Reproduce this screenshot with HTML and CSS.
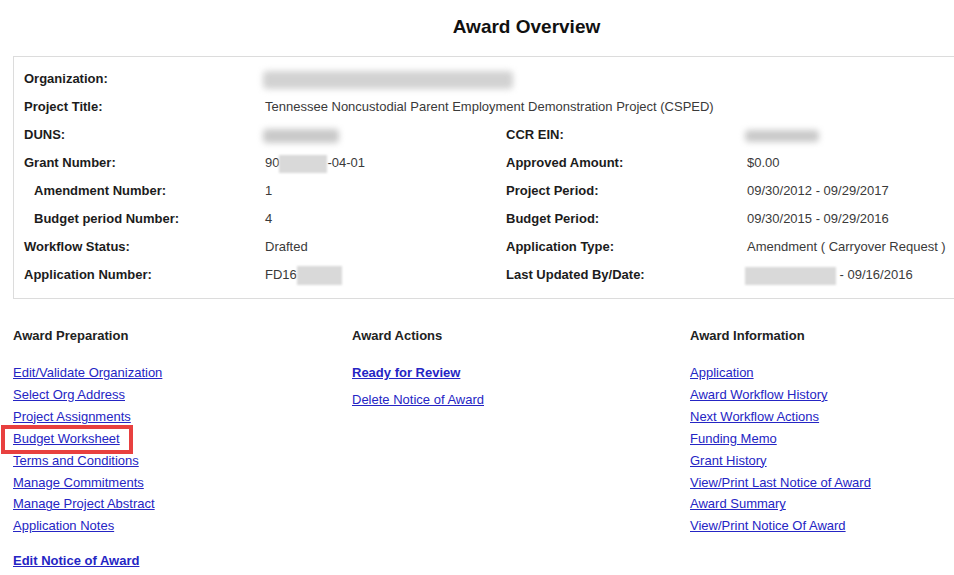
FILE: index.html
```html
<!DOCTYPE html>
<html lang="en">
<head>
    <meta charset="UTF-8">
    <title>Award Overview</title>
    <link rel="stylesheet" href="styles.css">
</head>
<body>
    <div class="page">
        <h1 class="page-title">Award Overview</h1>

        <!-- Summary box -->
        <div class="overview">
            <div class="label">Organization:</div>
            <div class="value wide"><span class="blur blur-org"></span></div>

            <div class="label">Project Title:</div>
            <div class="value wide">Tennessee Noncustodial Parent Employment Demonstration Project (CSPED)</div>

            <div class="label">DUNS:</div>
            <div class="value"><span class="blur blur-duns"></span></div>
            <div class="label">CCR EIN:</div>
            <div class="value"><span class="blur blur-ein"></span></div>

            <div class="label">Grant Number:</div>
            <div class="value">90<span class="mask mask-grant"></span>-04-01</div>
            <div class="label">Approved Amount:</div>
            <div class="value">$0.00</div>

            <div class="label sub">Amendment Number:</div>
            <div class="value">1</div>
            <div class="label">Project Period:</div>
            <div class="value">09/30/2012 - 09/29/2017</div>

            <div class="label sub">Budget period Number:</div>
            <div class="value">4</div>
            <div class="label">Budget Period:</div>
            <div class="value">09/30/2015 - 09/29/2016</div>

            <div class="label">Workflow Status:</div>
            <div class="value">Drafted</div>
            <div class="label">Application Type:</div>
            <div class="value">Amendment ( Carryover Request )</div>

            <div class="label">Application Number:</div>
            <div class="value">FD16<span class="mask mask-app"></span></div>
            <div class="label">Last Updated By/Date:</div>
            <div class="value"><span class="mask mask-user"></span> - 09/16/2016</div>
        </div>

        <!-- Link columns -->
        <div class="link-columns">
            <div class="link-col">
                <div class="col-title">Award Preparation</div>
                <ul class="link-list">
                    <li><a href="#">Edit/Validate Organization</a></li>
                    <li><a href="#">Select Org Address</a></li>
                    <li><a href="#">Project Assignments</a></li>
                    <li class="highlight"><a href="#">Budget Worksheet</a></li>
                    <li><a href="#">Terms and Conditions</a></li>
                    <li><a href="#">Manage Commitments</a></li>
                    <li><a href="#">Manage Project Abstract</a></li>
                    <li><a href="#">Application Notes</a></li>
                </ul>
                <a href="#" class="strong-link edit-notice">Edit Notice of Award</a>
            </div>
            <div class="link-col">
                <div class="col-title">Award Actions</div>
                <ul class="link-list actions">
                    <li><a href="#" class="strong-link">Ready for Review</a></li>
                    <li><a href="#">Delete Notice of Award</a></li>
                </ul>
            </div>
            <div class="link-col">
                <div class="col-title">Award Information</div>
                <ul class="link-list">
                    <li><a href="#">Application</a></li>
                    <li><a href="#">Award Workflow History</a></li>
                    <li><a href="#">Next Workflow Actions</a></li>
                    <li><a href="#">Funding Memo</a></li>
                    <li><a href="#">Grant History</a></li>
                    <li><a href="#">View/Print Last Notice of Award</a></li>
                    <li><a href="#">Award Summary</a></li>
                    <li><a href="#">View/Print Notice Of Award</a></li>
                </ul>
            </div>
        </div>
    </div>
</body>
</html>
```

FILE: styles.css
```css
html, body {
    margin: 0;
    padding: 0;
    background: #fff;
}
body {
    font-family: "Liberation Sans", Arial, sans-serif;
    font-size: 13px;
    color: #333;
    overflow: hidden;
}
.page {
    margin-left: 13px;
}
/* the page is wider than the window, so the title sits right of centre */
.page-title {
    margin: 0 0 0 86px;
    padding-top: 15px;
    font-size: 19px;
    line-height: 24px;
    font-weight: bold;
    color: #111;
    text-align: center;
}
.overview {
    margin-top: 17px;
    border: 1px solid #dcdcdc;
    border-right: none;
    padding: 8px 0 9px 10px;
    display: grid;
    grid-template-columns: 241px 241px 241px 1fr;
    grid-auto-rows: 28px;
    line-height: 28px;
}
.label {
    font-weight: bold;
    color: #1c1c1c;
}
.label.sub {
    padding-left: 10px;
}
.value {
    color: #3a3a3a;
    white-space: nowrap;
}
.value.wide {
    grid-column: 2 / 5;
}
.blur {
    display: inline-block;
    vertical-align: middle;
    background: #c9c9c9;
    filter: blur(3px);
    border-radius: 4px;
}
.blur-org {
    width: 250px;
    height: 18px;
    margin-left: -2px;
    background: #d2d2d2;
}
.blur-duns {
    width: 76px;
    height: 14px;
    margin-left: -2px;
}
.blur-ein {
    width: 74px;
    height: 12px;
    margin-left: -2px;
}
.mask {
    display: inline-block;
    vertical-align: middle;
    background: #d9d9d9;
    filter: blur(1px);
}
.mask-grant {
    width: 48px;
    height: 18px;
}
.mask-app {
    width: 45px;
    height: 19px;
}
.mask-user {
    width: 91px;
    height: 18px;
    margin-left: -2px;
}
/* Link columns */
.link-columns {
    display: grid;
    grid-template-columns: 339px 338px 1fr;
    margin-top: 26px;
}
.col-title {
    font-weight: bold;
    color: #222;
    line-height: 22px;
    margin-bottom: 15px;
}
.link-list {
    list-style: none;
    margin: 0;
    padding: 0;
    line-height: 21.9px;
}
.link-list.actions li + li {
    margin-top: 5px;
}
a {
    color: #2525c4;
    text-decoration: underline;
}
.strong-link {
    font-weight: bold;
}
.edit-notice {
    display: inline-block;
    margin-top: 13px;
    line-height: 22px;
}
/* Red annotation frame */
.highlight {
    position: relative;
}
.highlight::after {
    content: "";
    position: absolute;
    left: -12px;
    top: -3px;
    width: 124px;
    height: 21px;
    border: 4px solid #e8403f;
}
```
